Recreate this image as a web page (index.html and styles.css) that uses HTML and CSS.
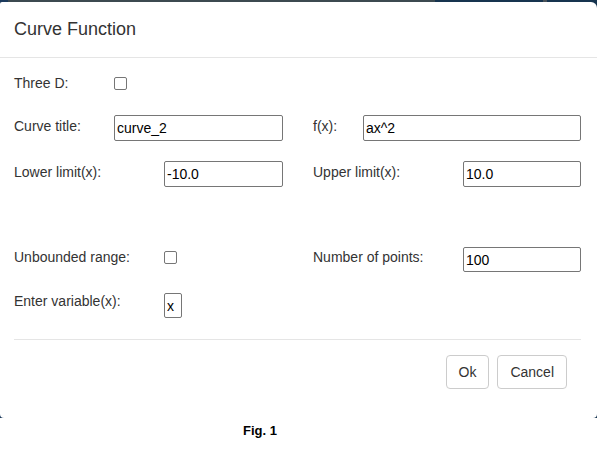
FILE: index.html
```html
<!DOCTYPE html>
<html>
<head>
<meta charset="utf-8">
<link rel="stylesheet" href="styles.css">
</head>
<body>
<div class="stage">
  <div class="modal">
    <div class="modal-header">
      <h4 class="modal-title">Curve Function</h4>
    </div>
    <div class="modal-body">
      <div class="row r1">
        <div class="field">
          <label class="lbl w100">Three D:</label>
          <span class="check"></span>
        </div>
        <div class="field"></div>
      </div>
      <div class="row r2">
        <div class="field">
          <label class="lbl w100">Curve title:</label>
          <input class="txt" type="text" value="curve_2">
        </div>
        <div class="field">
          <label class="lbl w50">f(x):</label>
          <input class="txt" type="text" value="ax^2">
        </div>
      </div>
      <div class="row r3">
        <div class="field">
          <label class="lbl w150">Lower limit(x):</label>
          <input class="txt" type="text" value="-10.0">
        </div>
        <div class="field">
          <label class="lbl w150">Upper limit(x):</label>
          <input class="txt" type="text" value="10.0">
        </div>
      </div>
      <div class="row r4">
        <div class="field">
          <label class="lbl w150">Unbounded range:</label>
          <span class="check"></span>
        </div>
        <div class="field">
          <label class="lbl w150">Number of points:</label>
          <input class="txt" type="text" value="100">
        </div>
      </div>
      <div class="row r5">
        <div class="field">
          <label class="lbl w150">Enter variable(x):</label>
          <input class="txt small" type="text" value="x">
        </div>
        <div class="field"></div>
      </div>
      <div class="divider"></div>
    </div>
    <div class="modal-footer">
      <button class="btn">Ok</button>
      <button class="btn">Cancel</button>
    </div>
  </div>
</div>
<p class="caption">Fig. 1</p>
</body>
</html>
```

FILE: styles.css
```css
html, body {
  margin: 0;
  padding: 0;
  background: #fff;
}
body {
  width: 597px;
  font-family: "Liberation Sans", Arial, sans-serif;
  font-size: 14px;
  color: #333;
}
.stage {
  height: 418px;
  padding-top: 2px;
  box-sizing: border-box;
  background: linear-gradient(to right, #1b3a5c 0 8px, #3c4a50 8px 435px, #16344f 435px 543px, #4a5258 543px 547px, #16344f 547px);
}
.modal {
  height: 416px;
  background: #fff;
  border-radius: 2px 6px 4px 4px;
}
.modal-header {
  padding: 14px 14px 15px;
  border-bottom: 1px solid #e5e5e5;
}
.modal-title {
  margin: 0;
  font-size: 18px;
  line-height: 26px;
  font-weight: normal;
  color: #333;
}
.modal-body {
  padding: 15px 16px 0 14px;
}
.row {
  display: grid;
  grid-template-columns: 269px 268px;
  column-gap: 30px;
}
.field {
  display: flex;
  align-items: flex-start;
}
.lbl {
  flex-shrink: 0;
  line-height: 20px;
  color: #333;
}
.w50 { width: 50px; }
.w100 { width: 100px; }
.w150 { width: 150px; }
.txt {
  flex: 1;
  min-width: 0;
  box-sizing: border-box;
  height: 26px;
  margin: 0;
  padding: 0 2px;
  border: 1px solid #767676;
  border-radius: 2px;
  font-family: "Liberation Sans", Arial, sans-serif;
  font-size: 14px;
  color: #000;
  background: #fff;
  outline: none;
}
.txt.small {
  flex: 0 0 18px;
  width: 18px;
}
.check {
  display: block;
  width: 13px;
  height: 13px;
  box-sizing: border-box;
  border: 1px solid #767676;
  border-radius: 2px;
  background: #fff;
  margin-top: 4px;
}
.r2 { margin-top: 22px; }
.r2 .lbl { margin-top: 1px; }
.r3 { margin-top: 20px; }
.r3 .lbl { margin-top: 1px; }
.r4 { margin-top: 60px; }
.r4 .txt { height: 25px; }
.r5 { margin-top: 19px; }
.r5 .txt { height: 25px; margin-top: 2px; }
.divider {
  margin-top: 21px;
  height: 1px;
  background: #e5e5e5;
}
.modal-footer {
  display: flex;
  justify-content: flex-end;
  gap: 8px;
  padding: 15px 30px 0 0;
}
.btn {
  margin: 0;
  padding: 6px 12px;
  font-family: "Liberation Sans", Arial, sans-serif;
  font-size: 14px;
  line-height: 20px;
  color: #333;
  background: #fff;
  border: 1px solid #ccc;
  border-radius: 4px;
}
.caption {
  margin: 5px 0 0;
  padding-left: 243px;
  font-family: "Liberation Sans", Arial, sans-serif;
  font-weight: bold;
  font-size: 13px;
  line-height: 15px;
  color: #000;
}
```
